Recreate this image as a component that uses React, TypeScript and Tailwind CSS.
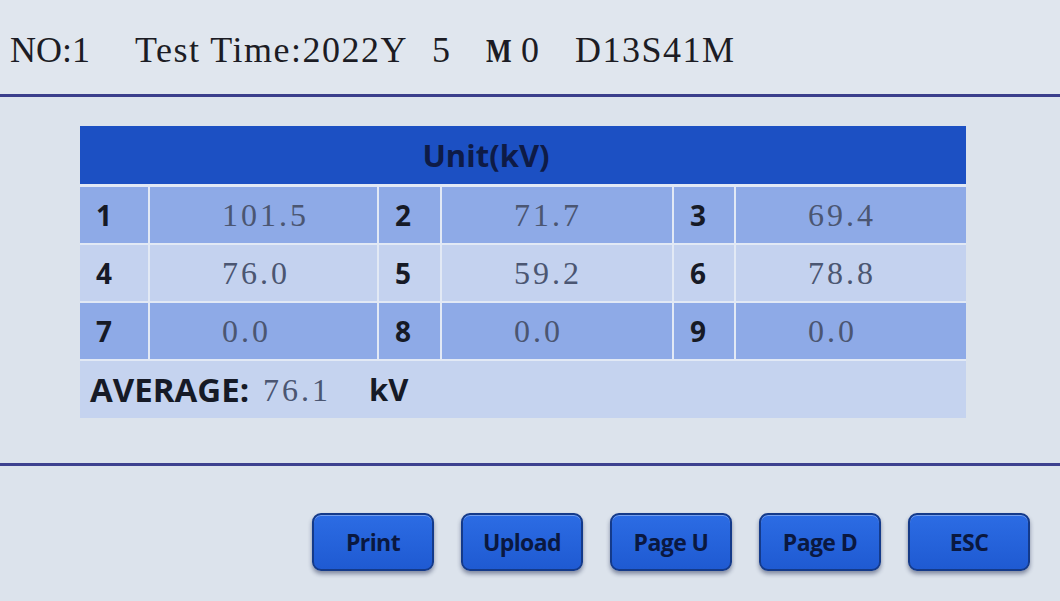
import React from "react";

const serif = { fontFamily: '"Liberation Serif", "Times New Roman", serif' };
const sans = { fontFamily: '"Open Sans", "Liberation Sans", sans-serif' };

const rows = [
  [
    ["1", "101.5"],
    ["2", "71.7"],
    ["3", "69.4"],
  ],
  [
    ["4", "76.0"],
    ["5", "59.2"],
    ["6", "78.8"],
  ],
  [
    ["7", "0.0"],
    ["8", "0.0"],
    ["9", "0.0"],
  ],
];

const buttons = ["Print", "Upload", "Page U", "Page D", "ESC"];

function Cell({ children, light, value }: { children: React.ReactNode; light: boolean; value?: boolean }) {
  return (
    <div
      className={`flex items-center ${light ? "bg-[#c4d2ef]" : "bg-[#8eaae7]"} ${
        value ? "pl-[72px] text-[32px] tracking-[3px] text-[#4b5672]" : "pl-[16px] text-[28px] font-bold text-[#161a26]"
      }`}
      style={value ? serif : sans}
    >
      {children}
    </div>
  );
}

export default function App() {
  return (
    <div className="w-[1060px] h-[601px] overflow-hidden bg-[#dce3ec] flex flex-col">
      {/* title strip */}
      <div
        className="h-[94px] flex items-center pl-[10px] pt-[6px] text-[36px] text-[#1c1c24] whitespace-nowrap bg-[#e0e6ee]"
        style={serif}
      >
        <span className="w-[125px]">NO:1</span>
        <span className="w-[297px] tracking-[1.5px]">Test Time:2022Y</span>
        <span className="w-[54px]">5</span>
        <span className="w-[35px] font-bold text-[34px] scale-x-[0.8] origin-left inline-block">M</span>
        <span className="w-[54px]">0</span>
        <span className="tracking-[1.5px]">D13S41M</span>
      </div>
      <div className="h-[3px] bg-[#3b3f8c]" />

      {/* table */}
      <div className="pt-[29px] pl-[80px]">
        <div className="w-[886px] flex flex-col gap-[2px] bg-[#e2e9f5]">
          <div
            className="h-[58px] bg-[#1c50c3] flex items-center justify-center pr-[74px] text-[31px] font-bold text-[#0e1b46]"
            style={sans}
          >
            Unit(kV)
          </div>
          {rows.map((r, i) => (
            <div
              key={i}
              className={`grid grid-cols-[68px_227px_61px_230px_60px_230px] gap-[2px] h-[56px] ${i === 0 ? "mt-[1px]" : ""}`}
            >
              {r.map(([n, v]) => (
                <React.Fragment key={n}>
                  <Cell light={i === 1}>{n}</Cell>
                  <Cell light={i === 1} value>
                    {v}
                  </Cell>
                </React.Fragment>
              ))}
            </div>
          ))}
          <div className="h-[57px] bg-[#c5d3ef] flex items-center pl-[10px] whitespace-nowrap">
            <span className="text-[33px] font-bold text-[#161a26]" style={sans}>
              AVERAGE:
            </span>
            <span className="ml-[14px] w-[106px] text-[32px] tracking-[3px] text-[#4b5672]" style={serif}>
              76.1
            </span>
            <span className="text-[31px] font-bold text-[#161a26]" style={sans}>
              kV
            </span>
          </div>
        </div>
      </div>

      <div className="mt-[45px] h-[3px] bg-[#3d418f]" />

      {/* buttons */}
      <div className="mt-[47px] flex justify-end gap-[27px] pr-[30px]">
        {buttons.map((b) => (
          <button
            key={b}
            type="button"
            className="w-[122px] h-[58px] rounded-[9px] border-[2px] border-[#143a8a] bg-gradient-to-b from-[#2c6ce4] to-[#1f5ad2] shadow-[0_3px_4px_rgba(20,30,70,0.45),inset_0_1px_0_rgba(255,255,255,0.35)] flex items-center justify-center text-[23px] font-bold tracking-tight text-[#0a1840]"
            style={sans}
          >
            {b}
          </button>
        ))}
      </div>
    </div>
  );
}
